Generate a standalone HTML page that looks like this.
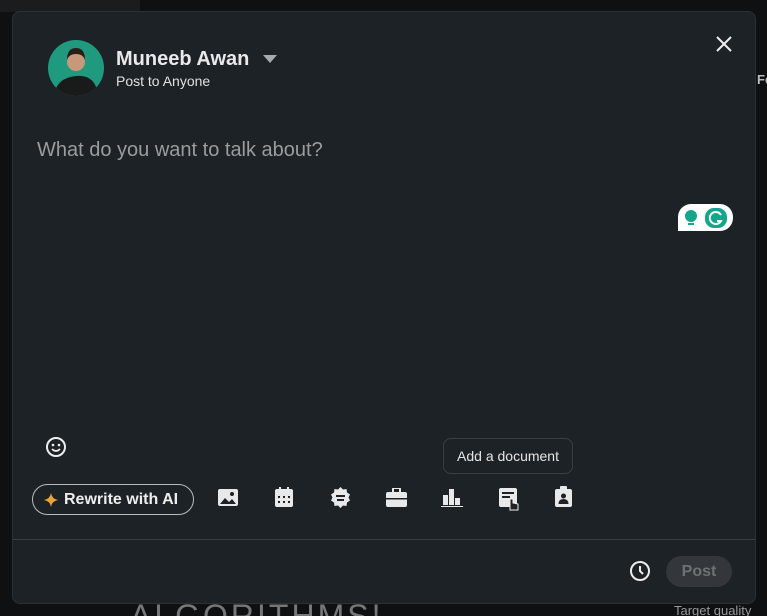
<!DOCTYPE html>
<html><head><style>
*{margin:0;padding:0;box-sizing:border-box}
html,body{width:767px;height:616px;overflow:hidden}
body{background:#0f1011;font-family:"Liberation Sans","DejaVu Sans",sans-serif;position:relative}
.bg{position:absolute;color:#666;font-size:13px;white-space:nowrap}
.modal{position:absolute;left:12px;top:11px;width:744px;height:593px;background:#1d2226;border-radius:8px;border:1px solid #2c3034}
.av{position:absolute;left:35px;top:28px;width:56px;height:56px;border-radius:50%;background:#1f9a7e;overflow:hidden}
.name{position:absolute;left:103px;top:36px;color:#e9e9e9;font-size:20px;font-weight:bold;white-space:nowrap}
.sub{position:absolute;left:103px;top:61px;color:#e0e0e0;font-size:14px}
.ph{position:absolute;left:24px;top:127px;color:#9a9c9e;font-size:20px}
.ic{position:absolute;fill:#e9e9e9}
.btn{position:absolute;left:19px;top:472px;width:162px;height:31px;border:1px solid #b9bbbd;border-radius:16px;color:#ededed;font-weight:bold;font-size:16px;line-height:29px;padding-left:31px;white-space:nowrap}
.tip{position:absolute;left:430px;top:426px;width:130px;height:36px;border:1px solid #3a3e42;border-radius:8px;background:#1d2226;color:#e5e5e5;font-size:14px;line-height:34px;text-align:center;white-space:nowrap}
.div{position:absolute;left:0;right:0;top:527px;height:1px;background:#3a3e42}
.post{position:absolute;left:653px;top:544px;width:66px;height:31px;border-radius:16px;background:#33373b;color:#6e7174;font-weight:bold;font-size:16px;text-align:center;line-height:31px}
</style></head><body>
<div class="bg" style="left:0;top:0;width:140px;height:12px;background:#1a1c1e"></div>
<div class="bg" style="left:757px;top:72px;font-weight:bold;color:#bbb">Fe</div>
<div class="bg" style="left:130px;top:598px;font-size:32px;color:#777;letter-spacing:3px">ALGORITHMS!</div>
<div class="bg" style="left:674px;top:603px;color:#999">Target quality</div>
<div class="modal">
 <div class="av"><svg width="56" height="56"><circle cx="28" cy="22" r="9" fill="#c9977a"/><path d="M19 20q0-12 9-12t9 12q-2-6-9-6t-9 6z" fill="#2a1c16"/><path d="M6 56q2-18 22-20t22 20z" fill="#1a1a1a"/></svg></div>
 <div class="name">Muneeb Awan</div>
 <svg class="ic" style="left:250px;top:43px" width="14" height="8"><path d="M0 0h14l-7 8z" fill="#aaa"/></svg>
 <div class="sub">Post to Anyone</div>
 <svg style="position:absolute;left:702px;top:23px" width="18" height="18"><path d="M2 2L16 16M16 2L2 16" stroke="#eee" stroke-width="2"/></svg>
 <div class="ph">What do you want to talk about?</div>
 <div style="position:absolute;left:665px;top:192px;width:55px;height:27px;background:#fff;border-radius:13px 13px 13px 0"></div>
 <svg style="position:absolute;left:670px;top:196px" width="46" height="20"><circle cx="8" cy="8" r="6" fill="#14a58a"/><rect x="5" y="15" width="6" height="2" fill="#14a58a"/><rect x="22" y="0" width="22" height="20" rx="9" fill="#14a58a"/><path d="M38 7a6 6 0 1 0 0 6h-4" fill="none" stroke="#fff" stroke-width="2"/></svg>
 <svg style="position:absolute;left:32px;top:424px" width="22" height="22"><circle cx="11" cy="11" r="9" fill="none" stroke="#eee" stroke-width="2"/><circle cx="8" cy="9" r="1.3" fill="#eee"/><circle cx="14" cy="9" r="1.3" fill="#eee"/><path d="M7 13q4 4 8 0" stroke="#eee" stroke-width="1.6" fill="none"/></svg>
 <div class="btn"><svg style="position:absolute;left:11px;top:8px" width="14" height="14"><path d="M7 0Q8 6 14 7Q8 8 7 14Q6 8 0 7Q6 6 7 0z" fill="#e8a33a"/></svg>Rewrite with AI</div>
 <svg class="ic" style="left:205px;top:477px" width="20" height="17"><rect x="0" y="0" width="20" height="17" rx="2"/><path d="M2 15l5-6 4 4 3-3 4 5z" fill="#1d2226"/><circle cx="14" cy="5" r="2" fill="#1d2226"/></svg>
 <svg class="ic" style="left:262px;top:475px" width="18" height="20"><rect x="0" y="2" width="18" height="18" rx="2"/><rect x="4" y="0" width="2" height="4"/><rect x="12" y="0" width="2" height="4"/><g fill="#1d2226"><rect x="3" y="9" width="2" height="2"/><rect x="8" y="9" width="2" height="2"/><rect x="13" y="9" width="2" height="2"/><rect x="3" y="14" width="2" height="2"/><rect x="8" y="14" width="2" height="2"/><rect x="13" y="14" width="2" height="2"/></g></svg>
 <svg class="ic" style="left:317px;top:475px" width="21" height="21"><path d="M10.5 0l2.5 2.5 3.5-.5.5 3.5 3 2-1.5 3 1.5 3-3 2-.5 3.5-3.5-.5-2.5 2.5-2.5-2.5-3.5.5-.5-3.5-3-2 1.5-3-1.5-3 3-2 .5-3.5 3.5.5z"/><rect x="6" y="8" width="9" height="2" fill="#1d2226"/><rect x="7" y="12" width="7" height="2" fill="#1d2226"/></svg>
 <svg class="ic" style="left:373px;top:476px" width="21" height="19"><rect x="0" y="4" width="21" height="15" rx="2"/><rect x="7" y="0" width="7" height="5" rx="1" fill="none" stroke="#e9e9e9" stroke-width="2"/><rect x="0" y="10" width="21" height="1.5" fill="#1d2226"/></svg>
 <svg class="ic" style="left:428px;top:477px" width="22" height="18"><rect x="2" y="6" width="5" height="10"/><rect x="8" y="0" width="5" height="16"/><rect x="14" y="9" width="5" height="7"/><rect x="0" y="17" width="22" height="1"/></svg>
 <svg class="ic" style="left:486px;top:476px" width="22" height="24"><rect x="0" y="0" width="18" height="19" rx="2"/><rect x="3" y="4" width="12" height="2" fill="#1d2226"/><rect x="3" y="8" width="8" height="2" fill="#1d2226"/><path d="M11 11v11h8v-6l-5-1v-4z" fill="#222" stroke="#eee" stroke-width="1"/></svg>
 <svg class="ic" style="left:542px;top:474px" width="17" height="21"><rect x="0" y="3" width="17" height="18" rx="2"/><rect x="5" y="0" width="7" height="5" rx="1"/><circle cx="8.5" cy="10" r="2.5" fill="#1d2226"/><path d="M3.5 18q0-5 5-5t5 5z" fill="#1d2226"/></svg>
 <div class="tip">Add a document</div>
 <div class="div"></div>
 <svg style="position:absolute;left:616px;top:548px" width="22" height="22"><circle cx="11" cy="11" r="9" fill="none" stroke="#eee" stroke-width="2"/><path d="M11 6v5l3 3" stroke="#eee" stroke-width="2" fill="none"/></svg>
 <div class="post">Post</div>
</div>
</body></html>
